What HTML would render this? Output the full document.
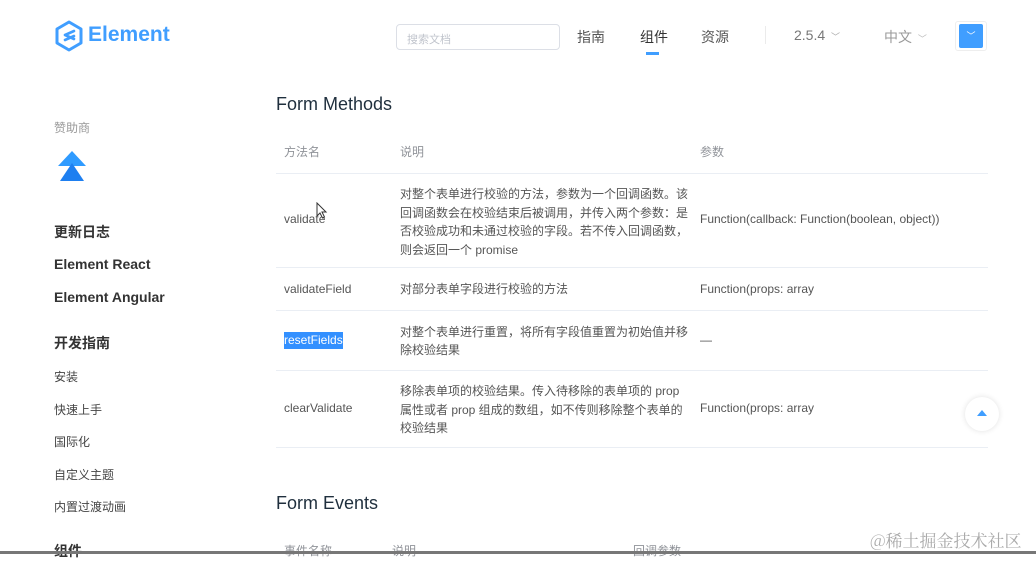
<!DOCTYPE html>
<html><head><meta charset="utf-8"><style>
*{margin:0;padding:0;box-sizing:border-box}
body{width:1036px;height:554px;overflow:hidden;background:#fff;font-family:"Liberation Sans","Noto Sans CJK SC",sans-serif;position:relative;color:#606266}
.a{position:absolute;white-space:nowrap}
.line{position:absolute;left:276px;width:712px;height:1px;background:#eaeef4}
.c{position:absolute;font-size:12px;color:#555;line-height:17px}
</style></head><body>
<svg class="a" style="left:54px;top:20px" width="30" height="32" viewBox="0 0 30 32"><path d="M15 2 L27 9 L27 23 L15 30 L3 23 L3 9 Z" fill="none" stroke="#409eff" stroke-width="3" stroke-linejoin="round"/><path d="M20 11 L11 15 M11 15 L20 19 M11 20 L20 16" stroke="#409eff" stroke-width="2.6" fill="none" stroke-linecap="round"/></svg>
<div class="a" style="left:88px;top:23px;font-size:21px;font-weight:bold;color:#409eff">Element</div>
<div class="a" style="left:396px;top:24px;width:164px;height:26px;border:1px solid #dcdfe6;border-radius:4px;font-size:11px;color:#c0c4cc;padding:6px 10px">搜索文档</div>
<div class="a" style="left:577px;top:27px;font-size:14px;color:#555">指南</div>
<div class="a" style="left:640px;top:27px;font-size:14px;color:#333">组件</div>
<div class="a" style="left:646px;top:52px;width:13px;height:3px;background:#409eff"></div>
<div class="a" style="left:701px;top:27px;font-size:14px;color:#555">资源</div>
<div class="a" style="left:765px;top:26px;width:1px;height:18px;background:#ebebeb"></div>
<div class="a" style="left:794px;top:27px;font-size:14px;color:#777">2.5.4 <span style="font-size:9px;color:#aaa;margin-left:2px">﹀</span></div>
<div class="a" style="left:884px;top:27px;font-size:14px;color:#999">中文 <span style="font-size:9px;color:#bbb;margin-left:2px">﹀</span></div>
<div class="a" style="left:955px;top:21px;width:32px;height:30px;border:1px solid #eee;border-radius:3px"></div>
<div class="a" style="left:959px;top:24px;width:24px;height:24px;background:#409eff;border-radius:2px;color:#fff;font-size:9px;text-align:center;line-height:24px">﹀</div>
<div class="a" style="left:54px;top:119px;font-size:12px;color:#999">赞助商</div>
<svg class="a" style="left:56px;top:150px" width="32" height="32" viewBox="0 0 32 32"><path d="M16 1 L30 16 L2 16 Z" fill="#2f9bff"/><path d="M16 13 L28 31 L4 31 Z" fill="#1e7ff0"/></svg>
<div class="a" style="left:54px;top:222px;font-size:14px;font-weight:bold;color:#333">更新日志</div>
<div class="a" style="left:54px;top:256px;font-size:14px;font-weight:bold;color:#333">Element React</div>
<div class="a" style="left:54px;top:289px;font-size:14px;font-weight:bold;color:#333">Element Angular</div>
<div class="a" style="left:54px;top:333px;font-size:14px;font-weight:bold;color:#333">开发指南</div>
<div class="a" style="left:54px;top:368px;font-size:12px;color:#444">安装</div>
<div class="a" style="left:54px;top:401px;font-size:12px;color:#444">快速上手</div>
<div class="a" style="left:54px;top:433px;font-size:12px;color:#444">国际化</div>
<div class="a" style="left:54px;top:466px;font-size:12px;color:#444">自定义主题</div>
<div class="a" style="left:54px;top:498px;font-size:12px;color:#444">内置过渡动画</div>
<div class="a" style="left:54px;top:541px;font-size:14px;font-weight:bold;color:#333">组件</div>
<div class="a" style="left:276px;top:94px;font-size:18px;color:#1f2f3d">Form Methods</div>
<div class="c" style="left:284px;top:144px;color:#909399">方法名</div>
<div class="c" style="left:400px;top:144px;color:#909399">说明</div>
<div class="c" style="left:700px;top:144px;color:#909399">参数</div>
<div class="line" style="top:173px"></div>
<div class="c" style="left:284px;top:211px">validate</div>
<div class="c" style="left:400px;top:185px;width:292px;white-space:normal;line-height:18.5px">对整个表单进行校验的方法，参数为一个回调函数。该回调函数会在校验结束后被调用，并传入两个参数：是否校验成功和未通过校验的字段。若不传入回调函数，则会返回一个 promise</div>
<div class="c" style="left:700px;top:211px">Function(callback: Function(boolean, object))</div>
<svg class="a" style="left:316px;top:202px" width="12" height="18" viewBox="0 0 12 18"><path d="M1 1 L1 14 L4 11 L6.5 16 L8.5 15 L6 10 L10 10 Z" fill="#fff" stroke="#333" stroke-width="1"/></svg>
<div class="line" style="top:267px"></div>
<div class="c" style="left:284px;top:281px">validateField</div>
<div class="c" style="left:400px;top:281px">对部分表单字段进行校验的方法</div>
<div class="c" style="left:700px;top:281px">Function(props: array</div>
<div class="line" style="top:310px"></div>
<div class="c" style="left:284px;top:332px;background:#3390ff;color:#fff">resetFields</div>
<div class="c" style="left:400px;top:323px;width:292px;white-space:normal;line-height:18px">对整个表单进行重置，将所有字段值重置为初始值并移除校验结果</div>
<div class="c" style="left:700px;top:332px">—</div>
<div class="line" style="top:370px"></div>
<div class="c" style="left:284px;top:400px">clearValidate</div>
<div class="c" style="left:400px;top:382px;width:292px;white-space:normal;line-height:18.5px">移除表单项的校验结果。传入待移除的表单项的 prop 属性或者 prop 组成的数组，如不传则移除整个表单的校验结果</div>
<div class="c" style="left:700px;top:400px">Function(props: array</div>
<div class="line" style="top:447px"></div>
<div class="a" style="left:965px;top:397px;width:34px;height:34px;border-radius:50%;background:#fff;box-shadow:0 0 6px rgba(0,0,0,.12)"></div>
<div class="a" style="left:977px;top:410px;width:0;height:0;border-left:5px solid transparent;border-right:5px solid transparent;border-bottom:6px solid #409eff"></div>
<div class="a" style="left:276px;top:493px;font-size:18px;color:#1f2f3d">Form Events</div>
<div class="c" style="left:284px;top:543px;color:#909399">事件名称</div>
<div class="c" style="left:392px;top:543px;color:#909399">说明</div>
<div class="c" style="left:633px;top:543px;color:#909399">回调参数</div>
<div class="a" style="left:870px;top:527px;font-size:17px;color:#aaa;font-family:'Noto Serif CJK SC',serif">@稀土掘金技术社区</div>
<div class="a" style="left:0;top:551px;width:1036px;height:3px;background:#777"></div>
</body></html>
